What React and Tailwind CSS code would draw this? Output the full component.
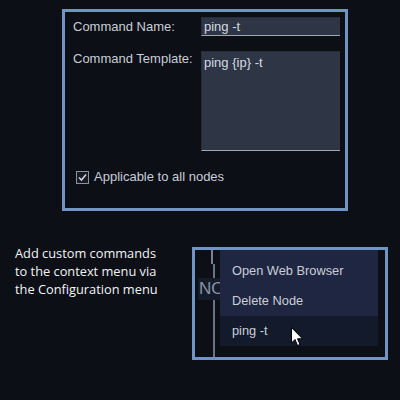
import React from "react";

export default function App() {
  const sans = { fontFamily: '"Liberation Sans", Arial, sans-serif' };
  return (
    <div className="w-[400px] h-[400px] bg-[#0c0f15] overflow-hidden flex flex-col" style={sans}>
      {/* Top config box */}
      <div className="ml-[62px] mt-[9px] w-[286px] h-[202px] border-[3px] border-[#7094c3] flex flex-col pl-[8px] pr-[5px] pt-[5px]">
        <div className="flex items-start">
          <div className="w-[128px] text-[13px] leading-[19px] text-[#c8ced8]">Command Name:</div>
          <div className="w-[139px] h-[19px] bg-[#2e3545] border-t border-l border-[#262c3a] border-b border-b-[#a3a8b0] text-[13px] leading-[17px] text-[#d4d9e2] pl-[2px]">
            ping -t
          </div>
        </div>
        <div className="flex items-start mt-[15px]">
          <div className="w-[128px] text-[13px] leading-[13px] pt-[1px] text-[#c8ced8]">Command Template:</div>
          <div className="w-[139px] h-[100px] bg-[#2e3545] border-t border-l border-[#262c3a] border-b border-b-[#a3a8b0] text-[13px] leading-[17px] text-[#d4d9e2] pl-[2px] pt-[2px]">
            ping {"{ip}"} -t
          </div>
        </div>
        <div className="flex items-center mt-[18px] ml-[3px]">
          <div className="w-[13px] h-[13px] border border-[#8d939e] bg-[#161b24] flex items-center justify-center">
            <svg width="9" height="9" viewBox="0 0 9 9">
              <path d="M1 4.5 L3.5 7 L8 1.5" stroke="#d0d4da" strokeWidth="1.6" fill="none" />
            </svg>
          </div>
          <div className="ml-[5px] text-[13px] leading-[16px] text-[#c8ced8]">Applicable to all nodes</div>
        </div>
      </div>

      {/* Bottom section */}
      <div className="flex mt-[36px]">
        <div
          className="ml-[15px] mt-[-3px] w-[170px] text-[12.8px] leading-[18px] text-[#f2f4f7]"
          style={{ fontFamily: '"Open Sans", "Noto Sans", sans-serif' }}
        >
          Add custom commands
          <br />
          to the context menu via
          <br />
          the Configuration menu
        </div>
        <div className="ml-[7px] w-[196px] h-[113px] border-[3px] border-[#7094c3] relative overflow-hidden">
          {/* canvas content beneath the menu */}
          <div className="absolute left-[16px] top-0 w-[2px] h-[14px] bg-[#7a8292]" />
          <div className="absolute left-[18px] top-[14px] w-[2px] h-[100px] bg-[#6b7383]" />
          <div className="absolute left-[3px] top-[28px] h-[22px] w-[60px] bg-[#141b2b] text-[17px] leading-[22px] text-[#8a93a3] pl-[1px]">
            NODE
          </div>
          {/* context menu */}
          <div className="absolute left-[25px] top-0 w-[158px] flex flex-col text-[12.8px] text-[#c9ced8]">
            <div className="bg-[#1f2641] pt-[6px]">
              <div className="h-[30px] leading-[30px] pl-[12px]">Open Web Browser</div>
              <div className="h-[30px] leading-[30px] pl-[12px]">Delete Node</div>
            </div>
            <div className="bg-[#121a2b] h-[30px] leading-[30px] pl-[12px]">ping -t</div>
          </div>
          {/* cursor */}
          <svg className="absolute left-[96px] top-[77px]" width="13" height="20" viewBox="0 0 13 20">
            <path
              d="M0.5 0.5 L0.5 16 L4 12.5 L6.5 18.5 L9 17.5 L6.5 11.8 L11.5 11.8 Z"
              fill="#ffffff"
              stroke="#000000"
              strokeWidth="1"
              strokeLinejoin="miter"
            />
          </svg>
        </div>
      </div>
    </div>
  );
}
